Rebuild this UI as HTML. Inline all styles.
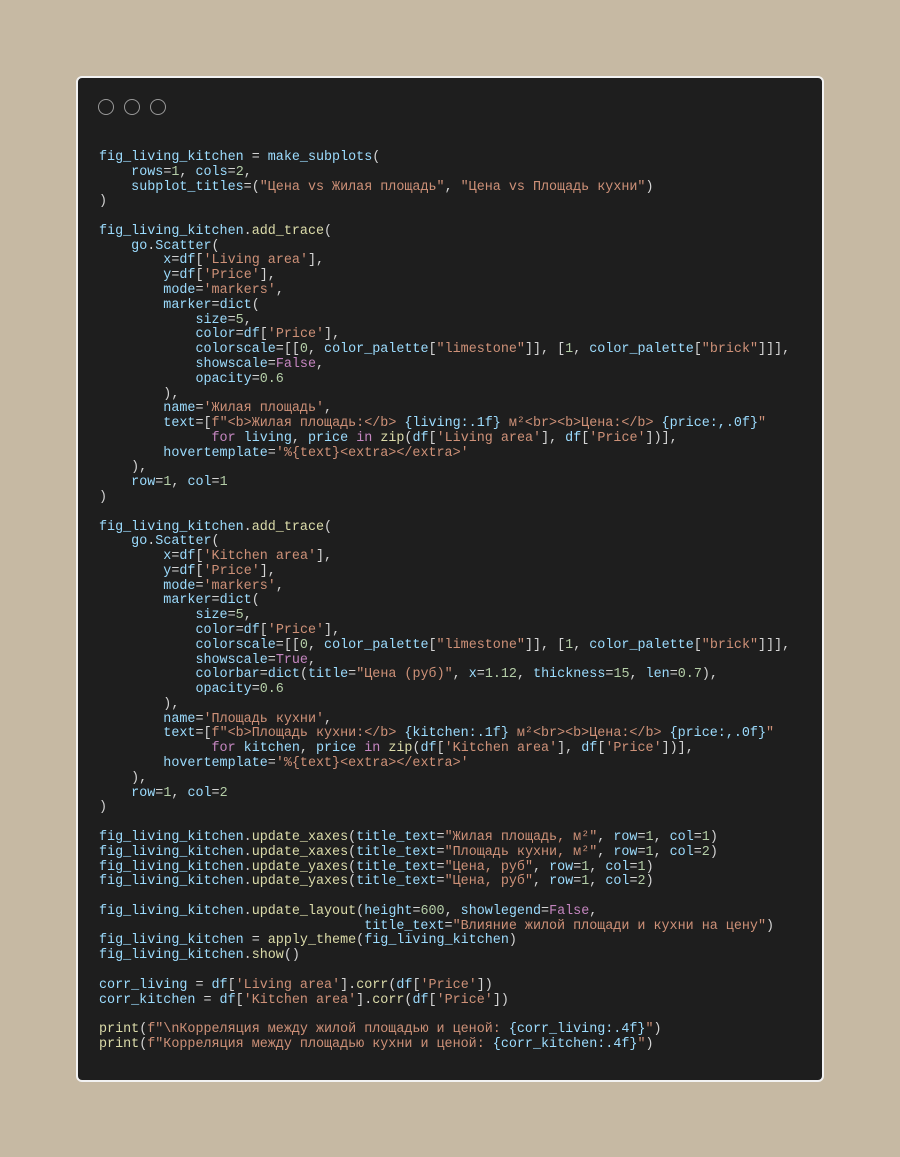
<!DOCTYPE html>
<html><head><meta charset="utf-8"><style>
html,body{margin:0;padding:0;}
body{width:900px;height:1157px;background:#c6b9a3;position:relative;overflow:hidden;}
.card{position:absolute;left:76px;top:76px;width:744px;height:1002px;background:#1e1e1e;border:2px solid #f2f2f2;border-radius:6px;}
.dot{position:absolute;top:21px;width:14px;height:14px;border:1.5px solid #999;border-radius:50%;}
pre{position:absolute;left:21px;top:73px;margin:0;font-family:"Liberation Mono","Noto Sans CJK SC",monospace;font-size:13.4px;line-height:14.78px;color:#d4d4d4;}
.v{color:#9cdcfe}.f{color:#dcdcaa}.s{color:#ce9178}.n{color:#b5cea8}.k{color:#c586c0}
</style></head><body>
<div class="card">
<div class="dot" style="left:20px"></div><div class="dot" style="left:46px"></div><div class="dot" style="left:72px"></div>
<pre><span class="v">fig_living_kitchen</span> = <span class="v">make_subplots</span>(
    <span class="v">rows</span>=<span class="n">1</span>, <span class="v">cols</span>=<span class="n">2</span>,
    <span class="v">subplot_titles</span>=(<span class="s">"Цена vs Жилая площадь"</span>, <span class="s">"Цена vs Площадь кухни"</span>)
)

<span class="v">fig_living_kitchen</span>.<span class="f">add_trace</span>(
    <span class="v">go</span>.<span class="v">Scatter</span>(
        <span class="v">x</span>=<span class="v">df</span>[<span class="s">'Living area'</span>],
        <span class="v">y</span>=<span class="v">df</span>[<span class="s">'Price'</span>],
        <span class="v">mode</span>=<span class="s">'markers'</span>,
        <span class="v">marker</span>=<span class="v">dict</span>(
            <span class="v">size</span>=<span class="n">5</span>,
            <span class="v">color</span>=<span class="v">df</span>[<span class="s">'Price'</span>],
            <span class="v">colorscale</span>=[[<span class="n">0</span>, <span class="v">color_palette</span>[<span class="s">"limestone"</span>]], [<span class="n">1</span>, <span class="v">color_palette</span>[<span class="s">"brick"</span>]]],
            <span class="v">showscale</span>=<span class="k">False</span>,
            <span class="v">opacity</span>=<span class="n">0.6</span>
        ),
        <span class="v">name</span>=<span class="s">'Жилая площадь'</span>,
        <span class="v">text</span>=[<span class="s">f"&lt;b&gt;Жилая площадь:&lt;/b&gt; </span><span class="v">{living:.1f}</span><span class="s"> м²&lt;br&gt;&lt;b&gt;Цена:&lt;/b&gt; </span><span class="v">{price:,.0f}</span><span class="s">"</span>
              <span class="k">for</span> <span class="v">living</span>, <span class="v">price</span> <span class="k">in</span> <span class="f">zip</span>(<span class="v">df</span>[<span class="s">'Living area'</span>], <span class="v">df</span>[<span class="s">'Price'</span>])],
        <span class="v">hovertemplate</span>=<span class="s">'%{text}&lt;extra&gt;&lt;/extra&gt;'</span>
    ),
    <span class="v">row</span>=<span class="n">1</span>, <span class="v">col</span>=<span class="n">1</span>
)

<span class="v">fig_living_kitchen</span>.<span class="f">add_trace</span>(
    <span class="v">go</span>.<span class="v">Scatter</span>(
        <span class="v">x</span>=<span class="v">df</span>[<span class="s">'Kitchen area'</span>],
        <span class="v">y</span>=<span class="v">df</span>[<span class="s">'Price'</span>],
        <span class="v">mode</span>=<span class="s">'markers'</span>,
        <span class="v">marker</span>=<span class="v">dict</span>(
            <span class="v">size</span>=<span class="n">5</span>,
            <span class="v">color</span>=<span class="v">df</span>[<span class="s">'Price'</span>],
            <span class="v">colorscale</span>=[[<span class="n">0</span>, <span class="v">color_palette</span>[<span class="s">"limestone"</span>]], [<span class="n">1</span>, <span class="v">color_palette</span>[<span class="s">"brick"</span>]]],
            <span class="v">showscale</span>=<span class="k">True</span>,
            <span class="v">colorbar</span>=<span class="v">dict</span>(<span class="v">title</span>=<span class="s">"Цена (руб)"</span>, <span class="v">x</span>=<span class="n">1.12</span>, <span class="v">thickness</span>=<span class="n">15</span>, <span class="v">len</span>=<span class="n">0.7</span>),
            <span class="v">opacity</span>=<span class="n">0.6</span>
        ),
        <span class="v">name</span>=<span class="s">'Площадь кухни'</span>,
        <span class="v">text</span>=[<span class="s">f"&lt;b&gt;Площадь кухни:&lt;/b&gt; </span><span class="v">{kitchen:.1f}</span><span class="s"> м²&lt;br&gt;&lt;b&gt;Цена:&lt;/b&gt; </span><span class="v">{price:,.0f}</span><span class="s">"</span>
              <span class="k">for</span> <span class="v">kitchen</span>, <span class="v">price</span> <span class="k">in</span> <span class="f">zip</span>(<span class="v">df</span>[<span class="s">'Kitchen area'</span>], <span class="v">df</span>[<span class="s">'Price'</span>])],
        <span class="v">hovertemplate</span>=<span class="s">'%{text}&lt;extra&gt;&lt;/extra&gt;'</span>
    ),
    <span class="v">row</span>=<span class="n">1</span>, <span class="v">col</span>=<span class="n">2</span>
)

<span class="v">fig_living_kitchen</span>.<span class="f">update_xaxes</span>(<span class="v">title_text</span>=<span class="s">"Жилая площадь, м²"</span>, <span class="v">row</span>=<span class="n">1</span>, <span class="v">col</span>=<span class="n">1</span>)
<span class="v">fig_living_kitchen</span>.<span class="f">update_xaxes</span>(<span class="v">title_text</span>=<span class="s">"Площадь кухни, м²"</span>, <span class="v">row</span>=<span class="n">1</span>, <span class="v">col</span>=<span class="n">2</span>)
<span class="v">fig_living_kitchen</span>.<span class="f">update_yaxes</span>(<span class="v">title_text</span>=<span class="s">"Цена, руб"</span>, <span class="v">row</span>=<span class="n">1</span>, <span class="v">col</span>=<span class="n">1</span>)
<span class="v">fig_living_kitchen</span>.<span class="f">update_yaxes</span>(<span class="v">title_text</span>=<span class="s">"Цена, руб"</span>, <span class="v">row</span>=<span class="n">1</span>, <span class="v">col</span>=<span class="n">2</span>)

<span class="v">fig_living_kitchen</span>.<span class="f">update_layout</span>(<span class="v">height</span>=<span class="n">600</span>, <span class="v">showlegend</span>=<span class="k">False</span>,
                                 <span class="v">title_text</span>=<span class="s">"Влияние жилой площади и кухни на цену"</span>)
<span class="v">fig_living_kitchen</span> = <span class="f">apply_theme</span>(<span class="v">fig_living_kitchen</span>)
<span class="v">fig_living_kitchen</span>.<span class="f">show</span>()

<span class="v">corr_living</span> = <span class="v">df</span>[<span class="s">'Living area'</span>].<span class="f">corr</span>(<span class="v">df</span>[<span class="s">'Price'</span>])
<span class="v">corr_kitchen</span> = <span class="v">df</span>[<span class="s">'Kitchen area'</span>].<span class="f">corr</span>(<span class="v">df</span>[<span class="s">'Price'</span>])

<span class="f">print</span>(<span class="s">f"\nКорреляция между жилой площадью и ценой: </span><span class="v">{corr_living:.4f}</span><span class="s">"</span>)
<span class="f">print</span>(<span class="s">f"Корреляция между площадью кухни и ценой: </span><span class="v">{corr_kitchen:.4f}</span><span class="s">"</span>)</pre>
</div>
</body></html>
